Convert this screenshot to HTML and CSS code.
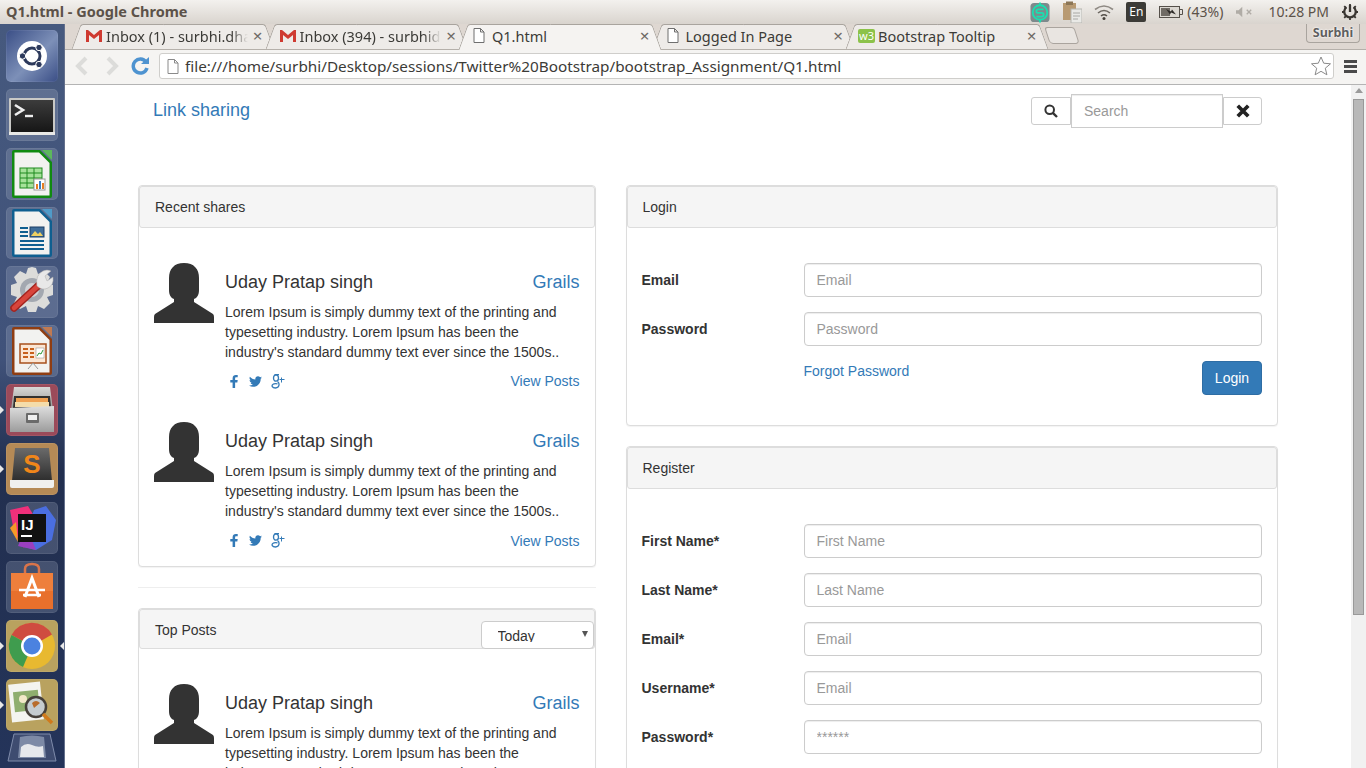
FILE: index.html
```html
<!DOCTYPE html>
<html lang="en">
<head>
<meta charset="utf-8">
<title>Q1.html - Google Chrome</title>
<link rel="stylesheet" href="styles.css">
</head>
<body>
<div class="desktop">
  <header class="topbar">
    <div class="win-title">Q1.html - Google Chrome</div>
    <div class="tray">
      <svg class="tray-sync" viewBox="0 0 22 22"><rect x="0.5" y="0.5" width="21" height="21" rx="4" fill="#7d8a8c"/><circle cx="11" cy="11" r="8" fill="none" stroke="#19e0b0" stroke-width="2"/><path d="M15 7.5H9Q7 7.5 7 9.500T9 11.500H13Q15 11.500 15 13.500T13 15.500H7" fill="none" stroke="#19e0b0" stroke-width="2"/><path d="M11 0v3M11 19v3" stroke="#19e0b0" stroke-width="2"/></svg>
      <svg class="tray-clip" viewBox="0 0 20 22"><rect x="1" y="2" width="13" height="17" fill="#b89a72"/><rect x="4" y="0.500" width="7" height="3.500" fill="#8c7656"/><rect x="9" y="8" width="11" height="14" fill="#e9e9e6" stroke="#b5b5b0"/><path d="M11 12h7M11 15h7M11 18h5" stroke="#a8a8a4"/></svg>
      <svg class="tray-wifi" viewBox="0 0 20 16"><path d="M1 5.500Q10 -1.500 19 5.500" fill="none" stroke="#8f8a84" stroke-width="1.600"/><path d="M4 9Q10 4 16 9" fill="none" stroke="#6c6760" stroke-width="1.600"/><path d="M7 12Q10 9.500 13 12" fill="none" stroke="#55504a" stroke-width="1.600"/><circle cx="10" cy="14.500" r="1.500" fill="#45403a"/></svg>
      <div class="tray-lang">En</div>
      <svg class="tray-batt" viewBox="0 0 24 12"><rect x="0.500" y="0.500" width="20" height="11" fill="#dcd8d2" stroke="#55504a"/><rect x="2" y="2" width="9" height="8" fill="#6f6a64"/><path d="M21 3.500h2.500v5H21" fill="none" stroke="#55504a"/><path d="M7 3l5 2.500 1-2 4 5-5-2-1 2z" fill="#2e2b28"/></svg>
      <div class="tray-text tray-pct">(43%)</div>
      <svg class="tray-vol" viewBox="0 0 19 12"><path d="M0 4h3l4-4v12l-4-4H0z" fill="#b0aca6"/><path d="M12 3.500l5 5M17 3.500l-5 5" stroke="#b0aca6" stroke-width="1.500"/></svg>
      <div class="tray-text tray-time">10:28 PM</div>
      <svg class="tray-power" viewBox="0 0 18 18"><path d="M9 1v8" stroke="#3a3632" stroke-width="2.600"/><path d="M5 3.500A6.500 6.500 0 1 0 13 3.500" fill="none" stroke="#3a3632" stroke-width="2.600"/><path d="M9 0v3M9 15v3M0 9h3M15 9h3M2.500 2.500l2 2M15.500 2.500l-2 2M2.500 15.500l2-2M15.500 15.500l-2-2" stroke="#3a3632" stroke-width="2"/></svg>
    </div>
  </header>
  <div class="workspace">
    <nav class="launcher">
      <div class="tile tile-dash"><svg viewBox="0 0 52 52"><circle cx="26" cy="26" r="15" fill="#fff"/><circle cx="26" cy="26" r="8" fill="none" stroke="#2d3a5c" stroke-width="3"/><circle cx="33" cy="17.500" r="3.200" fill="#2d3a5c" stroke="#fff"/><circle cx="16.500" cy="26" r="3.200" fill="#2d3a5c" stroke="#fff"/><circle cx="33" cy="34.500" r="3.200" fill="#2d3a5c" stroke="#fff"/></svg></div>
      <div class="tile"><svg viewBox="0 0 52 52"><defs><linearGradient id="termbg" x1="0" y1="0" x2="0" y2="1"><stop offset="0" stop-color="#3c3c3c"/><stop offset="1" stop-color="#161616"/></linearGradient></defs><rect x="3" y="9" width="46" height="37" rx="1" fill="#c9c9c6"/><rect x="5" y="11" width="42" height="32" fill="url(#termbg)"/><path d="M9 16l8 5-8 5" fill="none" stroke="#eee" stroke-width="2.600"/><path d="M19 27h8" stroke="#eee" stroke-width="2.400"/><rect x="3" y="43" width="46" height="3" fill="#e8e8e6"/></svg></div>
      <div class="tile"><svg viewBox="0 0 52 52"><path d="M6 4Q6 2 8 2H34L46 14V48Q46 50 44 50H8Q6 50 6 48Z" fill="#108a10"/><path d="M8.500 4.500H33L43.500 15V47.500H8.500Z" fill="#f2f2f0"/><path d="M36 2L46 2V12Z" fill="#5cb85c"/><rect x="14" y="20" width="22" height="20" fill="#a6e29a" stroke="#1e8a1e"/><path d="M14 25h22M14 30h22M14 35h22M21 20v20M28 20v20" stroke="#1e8a1e"/><rect x="28" y="31" width="11" height="11" fill="#fff" stroke="#999"/><rect x="30" y="36" width="2" height="5" fill="#e67e22"/><rect x="33" y="33" width="2" height="8" fill="#3c7fc4"/><rect x="36" y="35" width="2" height="6" fill="#e67e22"/></svg></div>
      <div class="tile"><svg viewBox="0 0 52 52"><path d="M6 4Q6 2 8 2H34L46 14V48Q46 50 44 50H8Q6 50 6 48Z" fill="#0f5f90"/><path d="M8.500 4.500H33L43.500 15V47.500H8.500Z" fill="#f2f2f0"/><path d="M36 2L46 2V12Z" fill="#4f9bc9"/><rect x="24" y="20" width="14" height="10" fill="#3f6d99" stroke="#1d3f66"/><path d="M25 29l4-5 3 3 2-2 3 4z" fill="#f0d060"/><path d="M14 21h8M14 25h8M14 29h8M14 34h24M14 38h24M14 42h24" stroke="#0f5f90" stroke-width="2"/></svg></div>
      <div class="tile"><svg viewBox="0 0 52 52"><path d="M26 1l4 1 2 6 6-3 6 6-3 6 6 2v10l-6 2 3 6-6 6-6-3-2 6H22l-2-6-6 3-6-6 3-6-6-2V19l6-2-3-6 6-6 6 3 2-6z" fill="#dcdcda"/><circle cx="26" cy="24" r="12" fill="#a3a8b0"/><circle cx="26" cy="24" r="7" fill="#cfd2d6"/><path d="M8 42L33 19" stroke="#a3241f" stroke-width="7.500" stroke-linecap="round"/><path d="M8 42L33 19" stroke="#d8453c" stroke-width="4.500" stroke-linecap="round"/><path d="M31 20Q29 9 37 5Q41 3 45 5L39 10L41 15L47 11Q48 19 42 22Q36 25 31 20Z" fill="#e8e8e8" stroke="#aaa" stroke-width="0.500"/></svg></div>
      <div class="tile"><svg viewBox="0 0 52 52"><path d="M6 4Q6 2 8 2H34L46 14V48Q46 50 44 50H8Q6 50 6 48Z" fill="#8f3d12"/><path d="M8.500 4.500H33L43.500 15V47.500H8.500Z" fill="#f2f2f0"/><path d="M36 2L46 2V12Z" fill="#c07a52"/><rect x="14" y="19" width="26" height="19" fill="#fbe6d4" stroke="#a8501c" stroke-width="1.500"/><path d="M17 24h5M17 28h5M17 32h5M24 24h4M24 28h4M24 32h4" stroke="#c8601c" stroke-width="2"/><rect x="30" y="23" width="8" height="10" fill="#fff" stroke="#888" stroke-width="0.500"/><path d="M31 31l2-3 2 1 2-4" fill="none" stroke="#2a9a3a"/><path d="M22 44l5-6 5 6" fill="none" stroke="#999"/></svg></div>
      <div class="tile tile-red run-left"><svg viewBox="0 0 52 52"><defs><linearGradient id="cabtop" x1="0" y1="0" x2="0" y2="1"><stop offset="0" stop-color="#d8d8d6"/><stop offset="1" stop-color="#8f8f8e"/></linearGradient><linearGradient id="cabfront" x1="0" y1="0" x2="0" y2="1"><stop offset="0" stop-color="#dedede"/><stop offset="1" stop-color="#9c9c9c"/></linearGradient></defs><path d="M8 3H44L47 26H5Z" fill="url(#cabtop)"/><path d="M8 12H44L45 24H7Z" fill="#33312f"/><rect x="10" y="14" width="32" height="4" fill="#f0a050"/><rect x="9" y="18" width="34" height="5" fill="#f4dcaa"/><path d="M4 24L48 22V48H4Z" fill="url(#cabfront)"/><rect x="20" y="29" width="13" height="10" rx="1" fill="#6a6a6a"/><rect x="22" y="31" width="9" height="5" fill="#f0f0f0"/></svg></div>
      <div class="tile tile-orange run-left"><svg viewBox="0 0 52 52"><defs><linearGradient id="subl" x1="0" y1="0" x2="0" y2="1"><stop offset="0" stop-color="#6a6a6a"/><stop offset="1" stop-color="#2d2d2d"/></linearGradient></defs><path d="M9 5H43L46 38H6Z" fill="url(#subl)"/><path d="M4 37H48V43Q48 45 46 45H6Q4 45 4 43Z" fill="#f0f0ee"/><text class="tile-s" x="26" y="30" text-anchor="middle">S</text></svg></div>
      <div class="tile"><svg viewBox="0 0 52 52"><path d="M4 8L22 4 28 14 18 46 8 30Z" fill="#f0307a"/><path d="M4 26L10 20 12 40Z" fill="#f59a28"/><path d="M28 8L40 4 50 18 46 38 30 48 14 44Z" fill="#4a6ee0"/><path d="M12 44L20 24 30 48Z" fill="#9a3fc0"/><rect x="12" y="12" width="28" height="28" fill="#111"/><text class="tile-ij" x="15" y="28">IJ</text><rect x="15" y="33" width="11" height="2" fill="#fff"/></svg></div>
      <div class="tile"><svg viewBox="0 0 52 52"><path d="M19 14V8Q19 3 26 3T33 8V14" fill="none" stroke="#d9744a" stroke-width="2.500"/><path d="M5 12H47V48H5Z" fill="#ee7f3c"/><path d="M5 30H47V48H5Z" fill="#e8702c"/><path d="M19 36L26 17 33 36" fill="none" stroke="#fff" stroke-width="3"/><path d="M13 29H39M17 34H35" stroke="#fff" stroke-width="2.500"/></svg></div>
      <div class="tile tile-gold run-left run-right"><svg viewBox="0 0 52 52"><circle cx="26" cy="26" r="23" fill="#e8b930"/><path d="M26 26L5.500 15A23 23 0 0 1 46 14.500Z" fill="#cf4c40"/><path d="M26 26L17 47A23 23 0 0 1 5.500 15Z" fill="#3f9c4e"/><circle cx="26" cy="26" r="11" fill="#fff"/><circle cx="26" cy="26" r="8.500" fill="#4b82e0"/></svg></div>
      <div class="tile tile-gold run-left"><svg viewBox="0 0 52 52"><rect x="4" y="4" width="32" height="38" fill="#f4f4f0" transform="rotate(-6 20 23)"/><rect x="8" y="12" width="25" height="20" fill="#8fae6e" transform="rotate(-6 20 23)"/><circle cx="17" cy="20" r="4" fill="#f2e8c8"/><circle cx="30" cy="28" r="10" fill="#c5ccd0" stroke="#46403a" stroke-width="2.500"/><path d="M26 24Q30 20 34 24L28 29Z" fill="#b86c2c"/><path d="M37 35L46 44" stroke="#d07a1c" stroke-width="3.500"/></svg></div>
      <div class="tile-trash"><svg viewBox="0 0 52 30"><path d="M8 2H44L50 29H2Z" fill="#3e4c70" stroke="#7f8cab"/><path d="M14 5Q26 2 38 5L40 26H12Z" fill="#7d8aa6"/><path d="M15 15Q20 10 26 13T37 14L38 25H14Z" fill="#e6e8ec"/></svg></div>
    </nav>
    <div class="browser">
      <div class="tabstrip">
        <div class="tab"><svg class="fav" viewBox="0 0 16 12"><path d="M0 0H2L8 5 14 0H16V12H13V5L8 9 3 5V12H0Z" fill="#cf3a30"/></svg><span class="tab-label">Inbox (1) - surbhi.dha</span><span class="tab-x">×</span></div>
        <div class="tab"><svg class="fav" viewBox="0 0 16 12"><path d="M0 0H2L8 5 14 0H16V12H13V5L8 9 3 5V12H0Z" fill="#cf3a30"/></svg><span class="tab-label">Inbox (394) - surbhid</span><span class="tab-x">×</span></div>
        <div class="tab tab-active"><svg class="fav-doc" viewBox="0 0 12 15"><path d="M1 .5H7.500L11 4V14.500H1ZM7.500 .5V4H11" fill="#fff" stroke="#6f6f6f"/></svg><span class="tab-label tab-full">Q1.html</span><span class="tab-x">×</span></div>
        <div class="tab"><svg class="fav-doc" viewBox="0 0 12 15"><path d="M1 .5H7.500L11 4V14.500H1ZM7.500 .5V4H11" fill="#fff" stroke="#6f6f6f"/></svg><span class="tab-label tab-full">Logged In Page</span><span class="tab-x">×</span></div>
        <div class="tab tab-w3"><span class="fav-w3">w3</span><span class="tab-label tab-full">Bootstrap Tooltip</span><span class="tab-x">×</span></div>
        <div class="newtab"></div>
        <div class="profile">Surbhi</div>
      </div>
      <div class="toolbar">
        <svg class="nav-icon" viewBox="0 0 14 20"><path d="M11 2L3 10l8 8" fill="none" stroke="#dcdcda" stroke-width="4"/></svg>
        <svg class="nav-icon nav-forward" viewBox="0 0 14 20"><path d="M3 2l8 8-8 8" fill="none" stroke="#dcdcda" stroke-width="4"/></svg>
        <svg class="nav-reload" viewBox="0 0 18 18"><path d="M15 5A7 7 0 1 0 16 11" fill="none" stroke="#4e93d0" stroke-width="3.500"/><path d="M10 7H18V0Z" fill="#4e93d0"/></svg>
        <div class="omnibox">
          <svg class="omni-doc" viewBox="0 0 12 15"><path d="M1 .5H7.500L11 4V14.500H1ZM7.500 .5V4H11" fill="#fff" stroke="#8a8a8a"/></svg>
          <span class="url">file:///home/surbhi/Desktop/sessions/Twitter%20Bootstrap/bootstrap_Assignment/Q1.html</span>
          <svg class="omni-star" viewBox="0 0 20 20"><path d="M10 1l2.700 6.200 6.800.6-5.200 4.400 1.600 6.600L10 15.300 4.100 18.800l1.600-6.600L.5 7.800l6.800-.6z" fill="#fff" stroke="#8a8a8a"/></svg>
        </div>
        <div class="menu-btn"><span></span><span></span><span></span></div>
      </div>
      <div class="viewport">
        <main class="page">
          <div class="container">
            <div class="navrow">
              <a class="brand" href="#">Link sharing</a>
              <form class="search">
                <button class="search-btn" type="button"><svg viewBox="0 0 14 14"><circle cx="5.700" cy="5.700" r="4.300" fill="none" stroke="#333" stroke-width="2"/><path d="M8.800 8.800L13 13" stroke="#333" stroke-width="2.400"/></svg></button>
                <input class="search-input" type="text" placeholder="Search">
                <button class="search-btn" type="button"><svg viewBox="0 0 12 12"><path d="M1.500 1.500l9 9M10.500 1.500l-9 9" stroke="#222" stroke-width="3.200"/></svg></button>
              </form>
            </div>
            <div class="columns">
              <div class="col">
                <section class="panel">
                  <div class="panel-heading">Recent shares</div>
                  <div class="panel-body feed">
                    <article class="item">
                      <svg class="avatar" viewBox="0 0 60 60"><path d="M30 0C40 0 45 6 45 15V27C45 32 43 35 40 36V39L59 51Q60 52 60 54V60H0V54Q0 52 1 51L20 39V36C17 35 15 32 15 27V15C15 6 20 0 30 0Z" fill="#333"/></svg>
                      <div class="item-body">
                        <div class="item-head"><h4 class="item-name">Uday Pratap singh</h4><a class="item-topic" href="#">Grails</a></div>
                        <p class="item-text">Lorem Ipsum is simply dummy text of the printing and typesetting industry. Lorem Ipsum has been the industry's standard dummy text ever since the 1500s..</p>
                        <div class="item-foot">
                          <div class="social">
                            <svg class="soc-f" viewBox="0 0 8 14"><path d="M2.500 14V8H0V5.500H2.500V3.500C2.500 1 4 0 6 0H8V2.500H6.500C5.500 2.500 5.200 3 5.200 3.800V5.500H8L7.600 8H5.200V14Z" fill="#337ab7"/></svg>
                            <svg class="soc-t" viewBox="0 0 24 24"><path d="M23.953 4.570a10 10 0 01-2.825.775 4.958 4.958 0 002.163-2.723c-.951.555-2.005.959-3.127 1.184a4.920 4.920 0 00-8.384 4.482C7.690 8.095 4.067 6.130 1.640 3.162a4.822 4.822 0 00-.666 2.475c0 1.710.870 3.213 2.188 4.096a4.904 4.904 0 01-2.228-.616v.060a4.923 4.923 0 003.946 4.827 4.996 4.996 0 01-2.212.085 4.936 4.936 0 004.604 3.417 9.867 9.867 0 01-6.102 2.105c-.390 0-.779-.023-1.170-.067a13.995 13.995 0 007.557 2.209c9.053 0 13.998-7.496 13.998-14.054 0-.210 0-.420-.015-.630A9.935 9.935 0 0024 4.590z" fill="#337ab7"/></svg>
                            <svg class="soc-g" viewBox="0 0 14 15"><g fill="none" stroke="#337ab7" stroke-width="1.300"><ellipse cx="5" cy="4" rx="2.500" ry="3.200"/><path d="M8 .7H3.500M6.500 7.500C9 9.500 8.500 13.500 4.500 14 1 14 .3 11.500 2 10.300 3 9.500 5 9.500 6.500 9.800"/><path d="M10.500 3.500v5M8.500 5.500h5" stroke-width="1"/></g></svg>
                          </div>
                          <a class="item-link" href="#">View Posts</a>
                        </div>
                      </div>
                    </article>
                    <article class="item">
                      <svg class="avatar" viewBox="0 0 60 60"><path d="M30 0C40 0 45 6 45 15V27C45 32 43 35 40 36V39L59 51Q60 52 60 54V60H0V54Q0 52 1 51L20 39V36C17 35 15 32 15 27V15C15 6 20 0 30 0Z" fill="#333"/></svg>
                      <div class="item-body">
                        <div class="item-head"><h4 class="item-name">Uday Pratap singh</h4><a class="item-topic" href="#">Grails</a></div>
                        <p class="item-text">Lorem Ipsum is simply dummy text of the printing and typesetting industry. Lorem Ipsum has been the industry's standard dummy text ever since the 1500s..</p>
                        <div class="item-foot item-foot-low">
                          <div class="social">
                            <svg class="soc-f" viewBox="0 0 8 14"><path d="M2.500 14V8H0V5.500H2.500V3.500C2.500 1 4 0 6 0H8V2.500H6.500C5.500 2.500 5.200 3 5.200 3.800V5.500H8L7.600 8H5.200V14Z" fill="#337ab7"/></svg>
                            <svg class="soc-t" viewBox="0 0 24 24"><path d="M23.953 4.570a10 10 0 01-2.825.775 4.958 4.958 0 002.163-2.723c-.951.555-2.005.959-3.127 1.184a4.920 4.920 0 00-8.384 4.482C7.690 8.095 4.067 6.130 1.640 3.162a4.822 4.822 0 00-.666 2.475c0 1.710.870 3.213 2.188 4.096a4.904 4.904 0 01-2.228-.616v.060a4.923 4.923 0 003.946 4.827 4.996 4.996 0 01-2.212.085 4.936 4.936 0 004.604 3.417 9.867 9.867 0 01-6.102 2.105c-.390 0-.779-.023-1.170-.067a13.995 13.995 0 007.557 2.209c9.053 0 13.998-7.496 13.998-14.054 0-.210 0-.420-.015-.630A9.935 9.935 0 0024 4.590z" fill="#337ab7"/></svg>
                            <svg class="soc-g" viewBox="0 0 14 15"><g fill="none" stroke="#337ab7" stroke-width="1.300"><ellipse cx="5" cy="4" rx="2.500" ry="3.200"/><path d="M8 .7H3.500M6.500 7.500C9 9.500 8.500 13.500 4.500 14 1 14 .3 11.500 2 10.300 3 9.500 5 9.500 6.500 9.800"/><path d="M10.500 3.500v5M8.500 5.500h5" stroke-width="1"/></g></svg>
                          </div>
                          <a class="item-link" href="#">View Posts</a>
                        </div>
                      </div>
                    </article>
                  </div>
                </section>
                <hr class="divider">
                <section class="panel">
                  <div class="panel-heading heading-select"><span>Top Posts</span><div class="fake-select"><span class="fake-select-text">Today</span><i class="fake-select-arrow"></i></div></div>
                  <div class="panel-body feed">
                    <article class="item">
                      <svg class="avatar" viewBox="0 0 60 60"><path d="M30 0C40 0 45 6 45 15V27C45 32 43 35 40 36V39L59 51Q60 52 60 54V60H0V54Q0 52 1 51L20 39V36C17 35 15 32 15 27V15C15 6 20 0 30 0Z" fill="#333"/></svg>
                      <div class="item-body">
                        <div class="item-head"><h4 class="item-name">Uday Pratap singh</h4><a class="item-topic" href="#">Grails</a></div>
                        <p class="item-text">Lorem Ipsum is simply dummy text of the printing and typesetting industry. Lorem Ipsum has been the industry's standard dummy text ever since the 1500s..</p>
                      </div>
                    </article>
                  </div>
                </section>
              </div>
              <div class="col">
                <section class="panel">
                  <div class="panel-heading">Login</div>
                  <form class="panel-body form">
                    <div class="form-row"><label class="form-label">Email</label><input class="form-input" type="text" placeholder="Email"></div>
                    <div class="form-row"><label class="form-label">Password</label><input class="form-input" type="password" placeholder="Password"></div>
                    <div class="form-row form-actions"><a class="forgot" href="#">Forgot Password</a><button class="btn-login" type="button">Login</button></div>
                  </form>
                </section>
                <section class="panel panel-register">
                  <div class="panel-heading">Register</div>
                  <form class="panel-body form">
                    <div class="form-row"><label class="form-label">First Name*</label><input class="form-input" type="text" placeholder="First Name"></div>
                    <div class="form-row"><label class="form-label">Last Name*</label><input class="form-input" type="text" placeholder="Last Name"></div>
                    <div class="form-row"><label class="form-label">Email*</label><input class="form-input" type="text" placeholder="Email"></div>
                    <div class="form-row"><label class="form-label">Username*</label><input class="form-input" type="text" placeholder="Email"></div>
                    <div class="form-row"><label class="form-label">Password*</label><input class="form-input" type="text" placeholder="******"></div>
                  </form>
                </section>
              </div>
            </div>
          </div>
        </main>
        <div class="scrollbar"><i class="scroll-up"></i><div class="scroll-thumb"></div></div>
      </div>
    </div>
  </div>
</div>
</body>
</html>
```

FILE: styles.css
```css
* { box-sizing: border-box; }
html, body { margin: 0; height: 100%; overflow: hidden; }
body { font-family: "Liberation Sans", Arial, sans-serif; font-size: 14px; line-height: 20px; color: #333; background: #fff; }
a { color: #337ab7; text-decoration: none; }
svg { display: block; flex: none; }

.desktop { display: flex; flex-direction: column; width: 1366px; height: 768px; overflow: hidden; }

/* top system bar */
.topbar { display: flex; align-items: center; justify-content: space-between; flex: none; height: 24px; background: linear-gradient(#f3f1ee, #d9d4ce); font-family: "Noto Sans", sans-serif; }
.win-title { padding: 0 0 2px 6px; font-size: 14.500px; font-weight: 700; color: #5c5249; }
.tray { display: flex; align-items: center; padding-right: 8px; color: #5c5249; }
.tray-sync { width: 20px; height: 21px; margin-right: 12px; }
.tray-clip { width: 20px; height: 22px; margin-right: 12px; }
.tray-wifi { width: 20px; height: 16px; margin-right: 12px; }
.tray-lang { width: 20px; height: 20px; margin-right: 13px; border-radius: 2px; background: #3c3b37; color: #fff; font-size: 12px; line-height: 20px; text-align: center; }
.tray-batt { width: 24px; height: 12px; margin-right: 4px; }
.tray-text { font-size: 14px; }
.tray-pct { margin-right: 13px; }
.tray-vol { width: 17px; height: 12px; margin-right: 15px; }
.tray-time { margin-right: 13px; }
.tray-power { width: 16px; height: 16px; }

/* launcher */
.workspace { display: flex; flex: 1; min-height: 0; }
.launcher { display: flex; flex-direction: column; align-items: center; gap: 7px; flex: none; width: 65px; padding: 6px 1px 0 0; background: linear-gradient(#46597e 0, #40527a 45%, #222f4f 60%, #24345a 100%); border-right: 1px solid #64708c; }
.tile { position: relative; flex: none; width: 52px; height: 52px; border-radius: 5px; background: rgba(190, 200, 220, .22); box-shadow: inset 0 0 0 1px rgba(255, 255, 255, .07); }
.tile svg { width: 52px; height: 52px; }
.tile-dash { background: linear-gradient(135deg, #3a4e86, #7d90b8 55%, #3a4e86); }
.tile-red { background: #9b4a5a; }
.tile-orange { background: #b58a56; }
.tile-gold { background: #b9a25f; }
.tile-trash { flex: none; width: 52px; height: 30px; margin-top: -6px; }
.tile-trash svg { width: 52px; height: 30px; }
.tile-s { font-family: "Liberation Sans", sans-serif; font-size: 26px; font-weight: 700; fill: #f0861a; }
.tile-ij { font-family: "Liberation Sans", sans-serif; font-size: 15px; font-weight: 700; fill: #fff; }
.run-left::before { content: ""; position: absolute; left: -6px; top: 22px; border-left: 4px solid #e8e8e8; border-top: 4px solid transparent; border-bottom: 4px solid transparent; }
.run-right::after { content: ""; position: absolute; right: -6px; top: 22px; border-right: 4px solid #e8e8e8; border-top: 4px solid transparent; border-bottom: 4px solid transparent; }

/* chrome */
.browser { display: flex; flex-direction: column; flex: 1; min-width: 0; }
.tabstrip { position: relative; z-index: 1; display: flex; align-items: flex-start; flex: none; height: 25px; padding-left: 7px; background: #ded7d1; font-family: "Noto Sans", sans-serif; }
.tab { position: relative; z-index: 1; display: flex; align-items: center; flex: none; width: 193.500px; height: 25px; padding: 0 2px 2px 14px; color: #3c3b37; font-size: 14.500px; }
.tab::before, .tab::after { content: ""; position: absolute; z-index: -1; top: 0; bottom: 0; width: 52%; background: #eeebe8; border-top: 1px solid #a9a49e; }
.tab::before { left: 4px; border-left: 1px solid #a9a49e; border-radius: 3px 0 0 0; transform: skewX(-20deg); }
.tab::after { right: -4px; border-right: 1px solid #a9a49e; border-radius: 0 3px 0 0; transform: skewX(20deg); }
.tab-active { z-index: 2; height: 26px; padding-bottom: 3px; }
.tab-active::before, .tab-active::after { background: #f5f3f1; }
.fav { width: 16px; height: 12px; margin-right: 4px; }
.fav-doc { width: 12px; height: 15px; margin-right: 7px; }
.tab-w3 { padding-left: 12px; }
.fav-w3 { flex: none; width: 17px; height: 14px; margin-right: 3px; border-radius: 2px; background: #8cc24a; color: #fff; font-size: 11px; line-height: 13px; text-align: center; }
.tab-label { flex: 1; min-width: 0; overflow: hidden; white-space: nowrap; -webkit-mask-image: linear-gradient(to right, #000 88%, transparent); mask-image: linear-gradient(to right, #000 88%, transparent); }
.tab-full { -webkit-mask-image: none; mask-image: none; }
.tab-x { flex: none; width: 12px; margin-left: 4px; color: #6e6a65; font-size: 17px; line-height: 1; text-align: center; }
.newtab { flex: none; width: 30px; height: 17px; margin: 3px 0 0 7px; border: 1px solid #aaa49e; border-radius: 3px 3px 4px 4px; background: #e9e5e1; transform: skewX(18deg); }
.profile { flex: none; width: 54px; height: 19px; margin-left: auto; margin-right: 6px; border: 1px solid #a9a49e; border-top: 0; border-radius: 0 0 4px 4px; color: #5f5f5f; font-size: 12.500px; font-weight: 700; line-height: 18px; text-align: center; text-shadow: 0 0 2px #fff, 0 0 2px #fff; }

.toolbar { display: flex; align-items: center; flex: none; height: 36px; padding: 0 9px 2px 10px; background: #f5f4f2; border-top: 1px solid #b5b0aa; border-bottom: 1px solid #b4b4b4; }
.nav-icon { width: 14px; height: 20px; }
.nav-forward { margin-left: 16px; }
.nav-reload { width: 18px; height: 18px; margin-left: 12px; }
.omnibox { display: flex; align-items: center; flex: 1; height: 26px; margin-left: 10px; padding: 0 2px 0 7px; background: #fff; border: 1px solid #cfcecb; border-radius: 3px; font-family: "Noto Sans", sans-serif; font-size: 15.300px; color: #3c3b37; }
.omni-doc { width: 12px; height: 15px; margin-right: 6px; }
.url { flex: 1; min-width: 0; white-space: nowrap; overflow: hidden; }
.omni-star { width: 20px; height: 20px; }
.menu-btn { display: flex; flex-direction: column; gap: 2px; margin-left: 10px; width: 13px; }
.menu-btn span { display: block; height: 3px; background: #4a4a4a; }

/* page */
.viewport { display: flex; flex: 1; min-height: 0; background: #fff; }
.page { flex: 1; min-width: 0; overflow: hidden; }
.container { width: 1170px; margin: 0 auto; padding: 0 15px; }
.navrow { display: flex; align-items: flex-start; justify-content: space-between; height: 100px; padding: 9px 16px 0 15px; }
.brand { margin-top: 6px; font-size: 18px; line-height: 20px; }
.search { display: flex; align-items: center; }
.search-btn { display: flex; align-items: center; justify-content: center; width: 40px; height: 28px; padding: 0; background: #fff; border: 1px solid #ccc; border-radius: 3px 0 0 3px; }
.search-btn:last-child { width: 39px; border-radius: 0 3px 3px 0; }
.search-btn svg { width: 14px; height: 14px; }
.search-input { width: 152px; height: 34px; padding: 6px 12px; border: 1px solid #ccc; font: 14px/20px "Liberation Sans", sans-serif; color: #555; background: #fff; box-shadow: inset 0 1px 1px rgba(0, 0, 0, .075); outline: 0; }
.search-input::placeholder, .form-input::placeholder { color: #999; opacity: 1; }

.columns { display: grid; grid-template-columns: 457.500px 652.500px; column-gap: 30px; align-items: start; }
.col { min-width: 0; }
.panel { background: #fff; border: 1px solid #ddd; border-radius: 4px; box-shadow: 0 1px 1px rgba(0, 0, 0, .05); }
.panel-register { margin-top: 20px; }
.panel-heading { height: 42px; padding: 10px 15px; background: #f5f5f5; border: 1px solid #ddd; border-radius: 3px; }
.heading-select { display: flex; align-items: flex-start; justify-content: space-between; height: 40px; padding-right: 0; }
.fake-select { position: relative; flex: none; width: 113px; height: 28px; margin-top: 1px; padding: 4px 0 0 16px; background: #fff; border: 1px solid #ccc; border-radius: 4px; }
.fake-select-text { display: block; height: 16px; overflow: hidden; line-height: 20px; }
.fake-select-arrow { position: absolute; right: 5px; top: 9px; border-top: 6px solid #555; border-left: 3.500px solid transparent; border-right: 3.500px solid transparent; }
.divider { height: 1px; margin: 20px 0; border: 0; background: #eee; }
.panel-body { padding: 35px 15px 16px; }

.feed { display: flex; flex-direction: column; gap: 31px; }
.item { display: flex; align-items: flex-start; gap: 11px; }
.avatar { width: 60px; height: 60px; }
.item-body { flex: 1; min-width: 0; padding-top: 9px; }
.item-head { display: flex; justify-content: space-between; align-items: center; height: 20px; }
.item-name { margin: 0; font-size: 18px; font-weight: 400; line-height: 20px; }
.item-topic { font-size: 18px; line-height: 20px; }
.item-text { margin: 10px 0 9px; }
.item-foot { display: flex; align-items: center; justify-content: space-between; height: 20px; }
.item-foot-low .item-link { padding-top: 1px; }
.social { display: flex; align-items: center; padding-left: 5px; }
.soc-f { width: 8px; height: 13px; margin-right: 11px; }
.soc-t { width: 13px; height: 13px; margin-right: 9px; }
.soc-g { width: 14px; height: 15px; }

.form { display: flex; flex-direction: column; gap: 15px; padding: 35px 15px 30px; }
.form-row { display: grid; grid-template-columns: 162px 1fr; align-items: center; }
.form-label { font-weight: 700; }
.form-input { width: 100%; height: 34px; padding: 6px 12px; border: 1px solid #ccc; border-radius: 4px; font: 14px/20px "Liberation Sans", sans-serif; color: #555; background: #fff; box-shadow: inset 0 1px 1px rgba(0, 0, 0, .075); outline: 0; }
.form-actions { display: flex; align-items: flex-start; justify-content: space-between; padding-left: 162px; }
.btn-login { width: 60px; height: 34px; padding: 0; background: #337ab7; border: 1px solid #2e6da4; border-radius: 4px; color: #fff; font: 14px/20px "Liberation Sans", sans-serif; }

.scrollbar { display: flex; flex-direction: column; align-items: center; flex: none; width: 15px; background: #f1f1f1; }
.scroll-up { flex: none; margin-top: 3px; border-bottom: 5px solid #9a9a9a; border-left: 4px solid transparent; border-right: 4px solid transparent; }
.scroll-thumb { flex: none; width: 11px; height: 516px; margin-top: 6px; background: #b8b8b8; border: 1px solid #999; }
```
